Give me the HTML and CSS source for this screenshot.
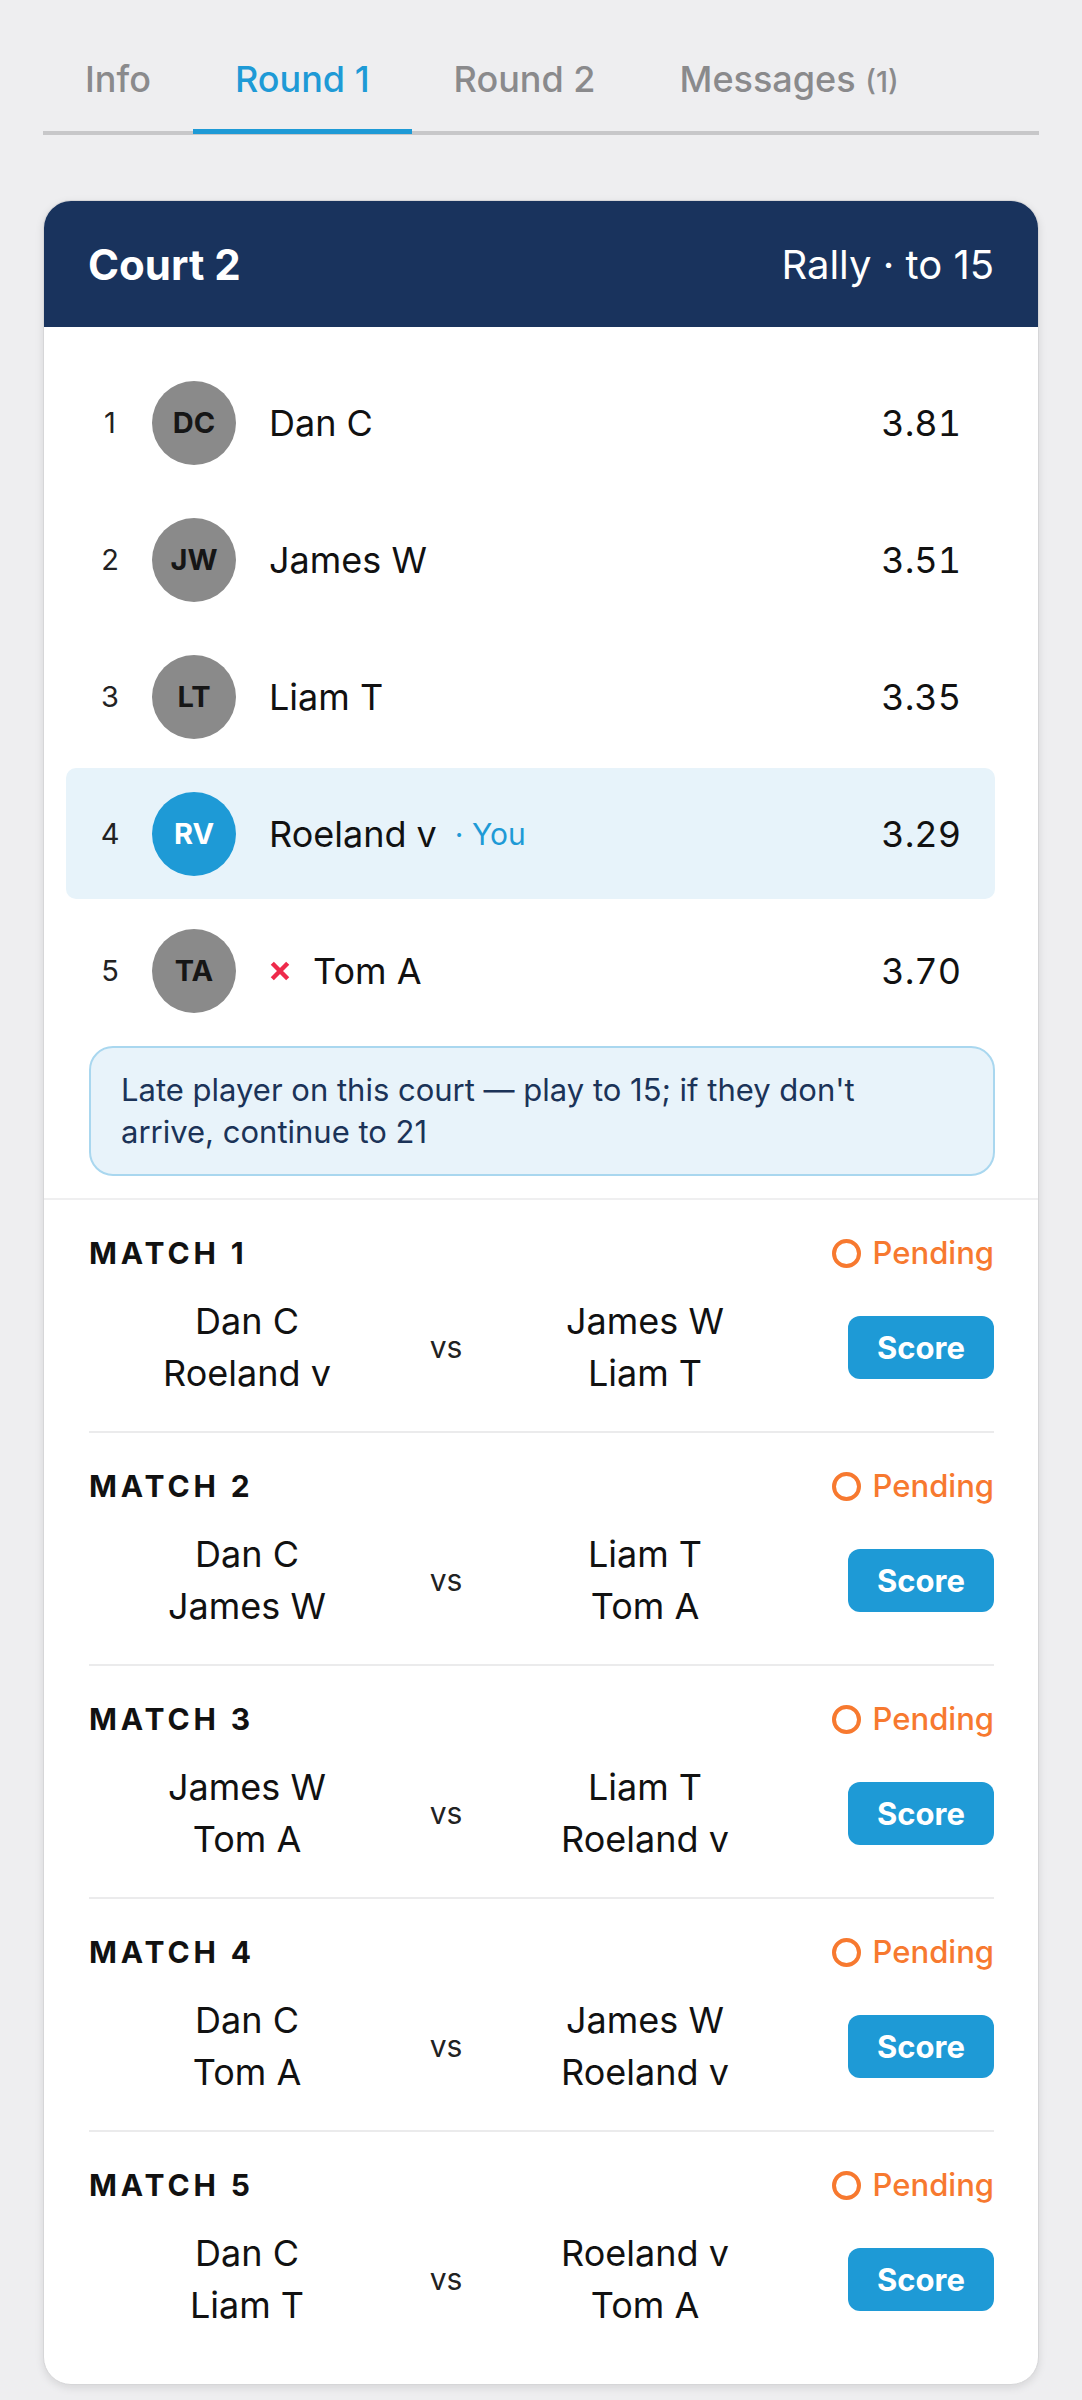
FILE: index.html
```html
<!DOCTYPE html>
<html lang="en">
<head>
    <meta charset="UTF-8">
    <meta name="viewport" content="width=device-width, initial-scale=1.0">
    <title>Round 1 - Court 2</title>
    <link rel="stylesheet" href="styles.css">
</head>
<body>
    <div class="page">
        <nav class="tabs">
            <a class="tab" href="#">Info</a>
            <a class="tab active" href="#">Round 1</a>
            <a class="tab" href="#">Round 2</a>
            <a class="tab" href="#">Messages <span class="count">(1)</span></a>
        </nav>

        <section class="court">
            <header class="court-head">
                <h2>Court 2</h2>
                <span class="format">Rally · to 15</span>
            </header>

            <div class="court-top">
                <ol class="players">
                    <li class="player">
                        <span class="rank">1</span>
                        <span class="avatar">DC</span>
                        <span class="name">Dan C</span>
                        <span class="rating">3.81</span>
                    </li>
                    <li class="player">
                        <span class="rank">2</span>
                        <span class="avatar">JW</span>
                        <span class="name">James W</span>
                        <span class="rating">3.51</span>
                    </li>
                    <li class="player">
                        <span class="rank">3</span>
                        <span class="avatar">LT</span>
                        <span class="name">Liam T</span>
                        <span class="rating">3.35</span>
                    </li>
                    <li class="player me">
                        <span class="rank">4</span>
                        <span class="avatar">RV</span>
                        <span class="name">Roeland v <span class="you">· You</span></span>
                        <span class="rating">3.29</span>
                    </li>
                    <li class="player">
                        <span class="rank">5</span>
                        <span class="avatar">TA</span>
                        <span class="name">
                            <svg class="absent" viewBox="0 0 20 20" width="22" height="22"><path d="M3 3 L17 17 M17 3 L3 17" /></svg>
                            Tom A
                        </span>
                        <span class="rating">3.70</span>
                    </li>
                </ol>
                <p class="note">Late player on this court — play to 15; if they don't arrive, continue to 21</p>
            </div>

            <div class="matches">
                <div class="match">
                    <div class="match-head">
                        <span class="match-title">Match 1</span>
                        <span class="status"><i class="ring"></i>Pending</span>
                    </div>
                    <div class="match-body">
                        <div class="team"><div>Dan C</div><div>Roeland v</div></div>
                        <span class="vs">vs</span>
                        <div class="team"><div>James W</div><div>Liam T</div></div>
                        <button class="score-btn">Score</button>
                    </div>
                </div>
                <div class="match">
                    <div class="match-head">
                        <span class="match-title">Match 2</span>
                        <span class="status"><i class="ring"></i>Pending</span>
                    </div>
                    <div class="match-body">
                        <div class="team"><div>Dan C</div><div>James W</div></div>
                        <span class="vs">vs</span>
                        <div class="team"><div>Liam T</div><div>Tom A</div></div>
                        <button class="score-btn">Score</button>
                    </div>
                </div>
                <div class="match">
                    <div class="match-head">
                        <span class="match-title">Match 3</span>
                        <span class="status"><i class="ring"></i>Pending</span>
                    </div>
                    <div class="match-body">
                        <div class="team"><div>James W</div><div>Tom A</div></div>
                        <span class="vs">vs</span>
                        <div class="team"><div>Liam T</div><div>Roeland v</div></div>
                        <button class="score-btn">Score</button>
                    </div>
                </div>
                <div class="match">
                    <div class="match-head">
                        <span class="match-title">Match 4</span>
                        <span class="status"><i class="ring"></i>Pending</span>
                    </div>
                    <div class="match-body">
                        <div class="team"><div>Dan C</div><div>Tom A</div></div>
                        <span class="vs">vs</span>
                        <div class="team"><div>James W</div><div>Roeland v</div></div>
                        <button class="score-btn">Score</button>
                    </div>
                </div>
                <div class="match">
                    <div class="match-head">
                        <span class="match-title">Match 5</span>
                        <span class="status"><i class="ring"></i>Pending</span>
                    </div>
                    <div class="match-body">
                        <div class="team"><div>Dan C</div><div>Liam T</div></div>
                        <span class="vs">vs</span>
                        <div class="team"><div>Roeland v</div><div>Tom A</div></div>
                        <button class="score-btn">Score</button>
                    </div>
                </div>
            </div>
        </section>
    </div>
</body>
</html>
```

FILE: styles.css
```css
body {
    margin: 0;
    background: #eeeef0;
    font-family: Inter, Roboto, "Noto Sans", sans-serif;
    color: #111;
}
.page {
    padding: 0 43px 14px;
}

/* tabs */
.tabs {
    display: flex;
    padding-top: 57px;
    border-bottom: 4px solid #c7c7c9;
}
.tab {
    padding: 0 42px 25px;
    line-height: 44px;
    font-size: 36px;
    font-weight: 500;
    color: #8a8a8c;
    text-decoration: none;
    border-bottom: 5px solid transparent;
    margin-bottom: -3px;
}
.tab.active {
    color: #1e9ad6;
    border-bottom-color: #1e9ad6;
}
.tab .count {
    font-size: 29px;
}

/* court card */
.court {
    margin-top: 65px;
    background: #fff;
    border: 1px solid #d6d6d8;
    border-radius: 28px;
    overflow: hidden;
    box-shadow: 0 3px 8px rgba(0,0,0,0.10);
}
.court-head {
    height: 126px;
    padding: 0 44px;
    display: flex;
    align-items: center;
    justify-content: space-between;
    background: #19335d;
    color: #fff;
}
.court-head h2 {
    margin: 0;
    font-size: 42px;
    font-weight: 700;
}
.format {
    font-size: 40px;
}

.court-top {
    padding: 30px 43px 22px 22px;
    border-bottom: 2px solid #efeff0;
}
.players {
    list-style: none;
    margin: 0;
    padding: 0;
    display: flex;
    flex-direction: column;
    gap: 6px;
}
.player {
    height: 131px;
    display: flex;
    align-items: center;
    padding: 0 34px 0 24px;
    border-radius: 10px;
}
.player.me {
    background: #e7f3fa;
}
.rank {
    width: 40px;
    text-align: center;
    font-size: 29px;
    color: #222;
}
.avatar {
    width: 84px;
    height: 84px;
    margin-left: 22px;
    border-radius: 50%;
    background: #8a8a8a;
    color: #161616;
    display: flex;
    align-items: center;
    justify-content: center;
    font-size: 29px;
    font-weight: 700;
}
.me .avatar {
    background: #1e9ad6;
    color: #fff;
}
.name {
    margin-left: 33px;
    font-size: 36px;
    display: flex;
    align-items: center;
}
.you {
    margin-left: 18px;
    font-size: 30px;
    color: #1e9ad6;
}
.absent {
    margin-right: 22px;
    fill: none;
    stroke: #ee2a4b;
    stroke-width: 4;
}
.rating {
    margin-left: auto;
    font-size: 36px;
    font-variant-numeric: tabular-nums;
}
.note {
    margin: 10px 0 0 23px;
    padding: 21px 48px 21px 30px;
    background: #e8f3fa;
    border: 2px solid #a9d7ef;
    border-radius: 24px;
    font-size: 31px;
    line-height: 42px;
    color: #1b3358;
}

/* matches */
.matches {
    padding: 0 44px 21px 45px;
}
.match {
    padding: 33px 0 32px;
    border-bottom: 2px solid #ebebec;
}
.match:last-child {
    border-bottom: none;
}
.match-head {
    display: flex;
    justify-content: space-between;
    align-items: center;
    line-height: 40px;
    margin-bottom: 22px;
}
.match-title {
    font-size: 30px;
    font-weight: 700;
    letter-spacing: 0.13em;
    text-transform: uppercase;
    color: #111;
}
.status {
    display: flex;
    align-items: center;
    gap: 12px;
    font-size: 31px;
    font-weight: 500;
    color: #f7792f;
}
.ring {
    width: 21px;
    height: 21px;
    border: 4.5px solid #f7792f;
    border-radius: 50%;
}
.match-body {
    display: grid;
    grid-template-columns: 1fr 82px 1fr auto;
    align-items: center;
}
.team {
    text-align: center;
    font-size: 36px;
    line-height: 52px;
}
.vs {
    text-align: center;
    font-size: 30px;
    color: #222;
}
.score-btn {
    margin-left: 45px;
    width: 146px;
    height: 63px;
    border: none;
    border-radius: 12px;
    background: #1e9ad6;
    color: #fff;
    font-family: inherit;
    font-size: 31px;
    font-weight: 700;
}
```
